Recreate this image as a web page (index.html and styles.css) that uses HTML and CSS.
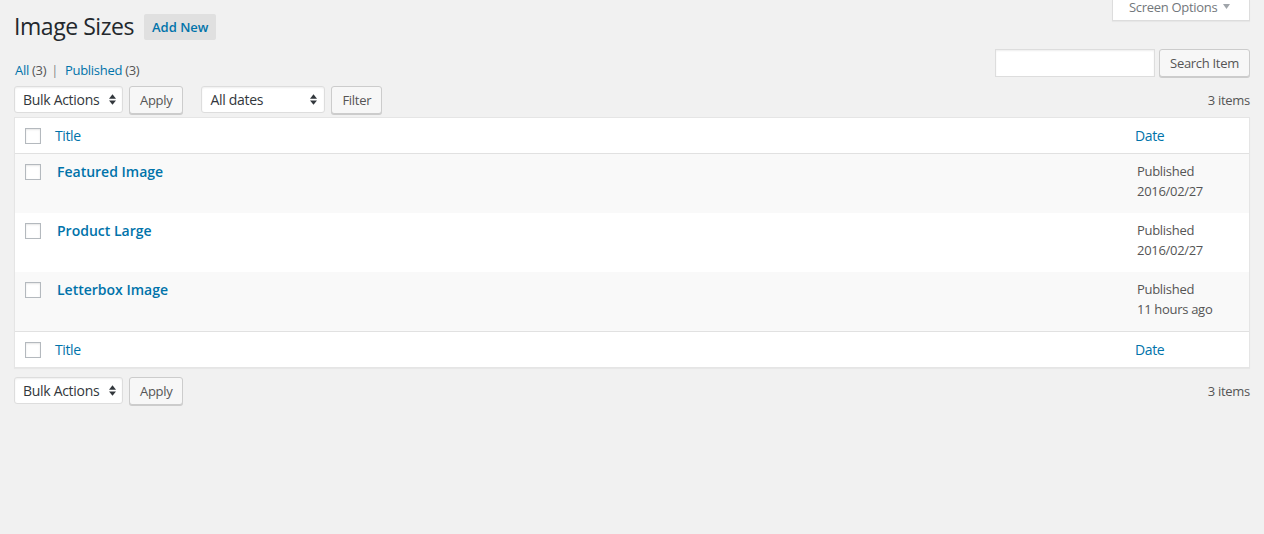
FILE: index.html
```html
<!DOCTYPE html>
<html>
<head>
<meta charset="utf-8">
<title>Image Sizes</title>
<link rel="stylesheet" href="styles.css">
</head>
<body>
<div class="wrap">
  <div class="screen-tab">
    <span>Screen Options</span>
    <svg class="tri" width="7" height="5" viewBox="0 0 7 5"><polygon points="0,0 7,0 3.5,5" fill="#a0a5aa"/></svg>
  </div>
  <div class="title-row">
    <h1>Image Sizes</h1>
    <a class="add-new">Add New</a>
  </div>
  <div class="filter-row">
    <ul class="subsubsub">
      <li><a>All <span class="count">(3)</span></a></li>
      <li class="sep">|</li>
      <li><a>Published <span class="count">(3)</span></a></li>
    </ul>
    <div class="search-box">
      <div class="input"></div>
      <button class="btn">Search Item</button>
    </div>
  </div>

  <div class="tablenav top">
    <div class="actions">
      <div class="select w-bulk"><span>Bulk Actions</span><svg class="arr" width="7" height="11" viewBox="0 0 8 12"><polygon points="0,5 4,0 8,5" /><polygon points="0,7 8,7 4,12"/></svg></div>
      <button class="btn">Apply</button>
    </div>
    <div class="actions gap">
      <div class="select w-dates"><span>All dates</span><svg class="arr" width="7" height="11" viewBox="0 0 8 12"><polygon points="0,5 4,0 8,5" /><polygon points="0,7 8,7 4,12"/></svg></div>
      <button class="btn">Filter</button>
    </div>
    <div class="num">3 items</div>
  </div>

  <div class="table">
    <div class="row head">
      <div class="cb"><span class="box"></span></div>
      <div class="col-title"><a>Title</a></div>
      <div class="col-date"><a>Date</a></div>
    </div>
    <div class="row item alt">
      <div class="cb"><span class="box"></span></div>
      <div class="col-title"><strong>Featured Image</strong></div>
      <div class="col-date">Published<br>2016/02/27</div>
    </div>
    <div class="row item">
      <div class="cb"><span class="box"></span></div>
      <div class="col-title"><strong>Product Large</strong></div>
      <div class="col-date">Published<br>2016/02/27</div>
    </div>
    <div class="row item alt">
      <div class="cb"><span class="box"></span></div>
      <div class="col-title"><strong>Letterbox Image</strong></div>
      <div class="col-date">Published<br>11 hours ago</div>
    </div>
    <div class="row head foot">
      <div class="cb"><span class="box"></span></div>
      <div class="col-title"><a>Title</a></div>
      <div class="col-date"><a>Date</a></div>
    </div>
  </div>

  <div class="tablenav bottom">
    <div class="actions">
      <div class="select w-bulk"><span>Bulk Actions</span><svg class="arr" width="7" height="11" viewBox="0 0 8 12"><polygon points="0,5 4,0 8,5" /><polygon points="0,7 8,7 4,12"/></svg></div>
      <button class="btn">Apply</button>
    </div>
    <div class="num">3 items</div>
  </div>
</div>
</body>
</html>
```
FILE: styles.css
```css
* { box-sizing: border-box; }
html, body { margin: 0; padding: 0; }
body {
  background: #f1f1f1;
  font-family: "Open Sans", "Liberation Sans", sans-serif;
  font-size: 13px;
  letter-spacing: -0.3px;
  color: #444;
  width: 1264px;
  height: 534px;
  overflow: hidden;
}
a { color: #0073aa; text-decoration: none; cursor: pointer; }

.wrap { padding: 0 14px; }

.screen-tab {
  float: right;
  width: 138px;
  height: 21px;
  background: #fff;
  border: 1px solid #ddd;
  border-top: none;
  box-shadow: 0 1px 1px rgba(0,0,0,.04);
  display: flex;
  align-items: flex-start;
  padding: 0 0 0 16px;
  color: #72777c;
  font-size: 13px;
  line-height: 14px;
}
.screen-tab .tri { margin-left: 6px; margin-top: 4px; }

.title-row { display: flex; align-items: flex-start; height: 41px; }
h1 {
  margin: 12px 0 0 0;
  font-size: 23px;
  font-weight: 400;
  line-height: 29px;
  letter-spacing: -0.45px;
  color: #23282d;
}
.add-new {
  margin: 14px 0 0 10px;
  height: 26px;
  line-height: 26px;
  padding: 0 8px;
  background: #e0e0e0;
  border-radius: 2px;
  font-weight: 600;
  font-size: 13px;
  letter-spacing: 0;
  color: #0073aa;
}

.filter-row {
  display: flex;
  justify-content: space-between;
  align-items: flex-start;
  height: 45px;
}
.subsubsub {
  list-style: none;
  margin: 16px 0 0 1px;
  padding: 0;
  display: flex;
  line-height: 26px;
  font-size: 13px;
}
.subsubsub .count { color: #555; }
.subsubsub .sep { color: #888; margin: 0 7px 0 5px; }

.search-box { display: flex; margin-top: 8px; gap: 4px; }
.search-box .input {
  width: 160px;
  height: 28px;
  background: #fff;
  border: 1px solid #ddd;
  box-shadow: inset 0 1px 2px rgba(0,0,0,.07);
}

.btn {
  font-family: "Open Sans", "Liberation Sans", sans-serif;
  font-size: 13px;
  letter-spacing: -0.3px;
  height: 28px;
  line-height: 26px;
  padding: 0 10px 1px;
  color: #555;
  background: #f7f7f7;
  border: 1px solid #ccc;
  border-radius: 3px;
  box-shadow: 0 1px 0 #ccc;
  margin: 0;
}
.search-box .btn { width: 91px; padding: 0 0 1px; }

.tablenav {
  display: flex;
  align-items: flex-start;
  height: 31px;
}
.tablenav.bottom { margin-top: 9px; }
.actions { display: flex; gap: 6px; }
.actions.gap { margin-left: 18px; }
.select {
  height: 27px;
  background: #fff;
  border: 1px solid #ddd;
  border-radius: 3px;
  box-shadow: inset 0 1px 2px rgba(0,0,0,.07);
  display: flex;
  align-items: center;
  justify-content: space-between;
  padding: 0 6px 0 8px;
  font-size: 14px;
  color: #32373c;
}
.select .arr { fill: #32373c; }
.w-bulk { width: 109px; }
.w-dates { width: 124px; padding-right: 7px; }
.num {
  margin-left: auto;
  line-height: 28px;
  color: #555;
  font-size: 13px;
}

.table {
  background: #fff;
  border: 1px solid #e5e5e5;
  box-shadow: 0 1px 1px rgba(0,0,0,.04);
}
.row {
  display: grid;
  grid-template-columns: 32px 1fr 122px;
}
.row.head {
  height: 36px;
  border-bottom: 1px solid #e1e1e1;
  font-size: 14px;
  line-height: 19.6px;
  letter-spacing: -0.4px;
  align-items: center;
}
.row.foot { border-bottom: none; border-top: 1px solid #e1e1e1; }
.row.head .col-title a, .row.head .col-date a { display: block; padding: 0 8px; }

.row.item { height: 59px; font-size: 13px; line-height: 19.5px; }
.row.item.alt { background: #f9f9f9; }
.row.item .col-title, .row.item .col-date { padding: 8px 10px; }
.row.item .col-title strong { font-size: 14px; font-weight: 600; letter-spacing: 0; color: #0073aa; }
.row.item .col-date { color: #555; }
.row.item .cb { padding-top: 10px; }

.cb { padding-left: 10px; display: flex; }
.box {
  width: 16px;
  height: 16px;
  border: 1px solid #b4b9be;
  background: #fff;
  box-shadow: inset 0 1px 2px rgba(0,0,0,.1);
}
```
